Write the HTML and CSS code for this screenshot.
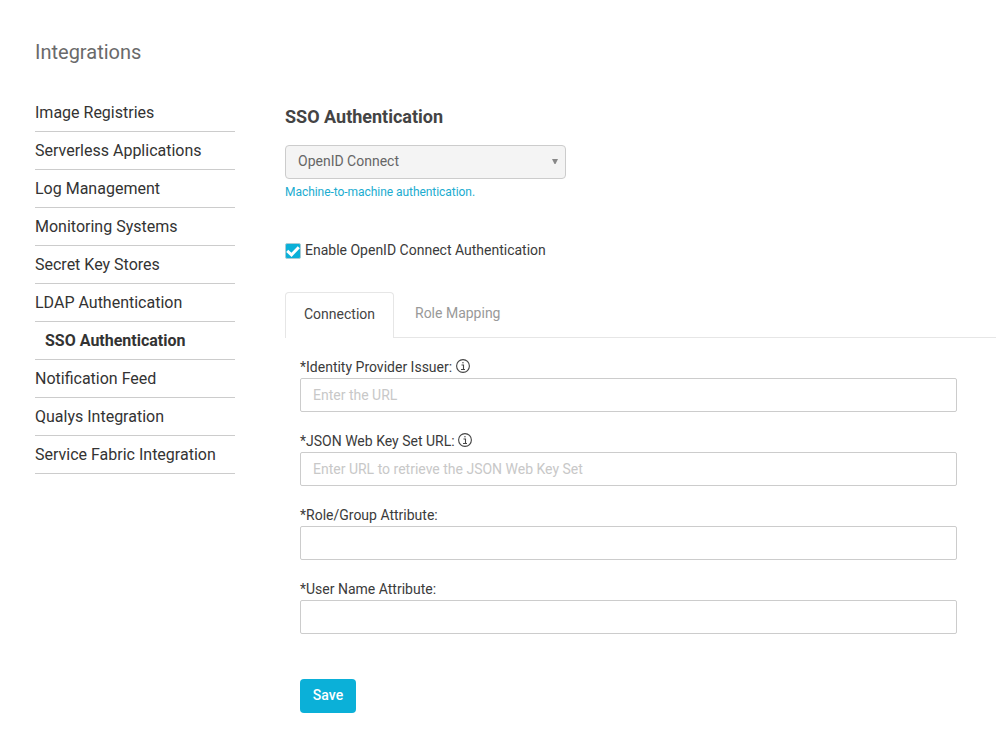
FILE: index.html
```html
<!DOCTYPE html>
<html lang="en">
<head>
<meta charset="utf-8">
<title>Integrations</title>
<link rel="stylesheet" href="styles.css">
</head>
<body>
<h1>Integrations</h1>
<div class="layout">
  <nav class="side">
    <a>Image Registries</a>
    <a>Serverless Applications</a>
    <a>Log Management</a>
    <a>Monitoring Systems</a>
    <a>Secret Key Stores</a>
    <a>LDAP Authentication</a>
    <a class="active">SSO Authentication</a>
    <a>Notification Feed</a>
    <a>Qualys Integration</a>
    <a>Service Fabric Integration</a>
  </nav>
  <main>
    <h2>SSO Authentication</h2>
    <div class="select"><span>OpenID Connect</span><svg width="6" height="5" viewBox="0 0 6 5"><path d="M0 0h6L3.500 5h-1z" fill="#888"/></svg></div>
    <p class="hint">Machine-to-machine authentication.</p>
    <label class="check"><svg width="16" height="16" viewBox="0 0 16 16"><rect x=".5" y=".5" width="15" height="15" rx="1.500" fill="#0bb0d8" stroke="#a9cdd6"/><path d="M2.200 7.800l4.300 4 7.300-7.600" fill="none" stroke="#fff" stroke-width="3"/></svg><span>Enable OpenID Connect Authentication</span></label>
    <div class="tabs"><div class="tab on">Connection</div><div class="tab">Role Mapping</div></div>
    <form class="panel">
      <div class="field"><label>*Identity Provider Issuer: <svg class="info" width="14" height="14" viewBox="0 0 14 14"><circle cx="7" cy="7" r="6.400"/><path d="M5.500 6h2v4.500M5 10.500h4M6.200 3.700h1.500"/></svg></label><input placeholder="Enter the URL"></div>
      <div class="field"><label>*JSON Web Key Set URL: <svg class="info" width="14" height="14" viewBox="0 0 14 14"><circle cx="7" cy="7" r="6.400"/><path d="M5.500 6h2v4.500M5 10.500h4M6.200 3.700h1.500"/></svg></label><input placeholder="Enter URL to retrieve the JSON Web Key Set"></div>
      <div class="field"><label>*Role/Group Attribute:</label><input></div>
      <div class="field"><label>*User Name Attribute:</label><input></div>
      <button type="button">Save</button>
    </form>
  </main>
</div>
</body>
</html>
```
FILE: styles.css
```css
* { box-sizing: border-box; }
body { margin: 0; padding: 40px 0 0 35px; font: 14px/20px Roboto, sans-serif; color: #3b3b3b; background: #fff; overflow: hidden; }
h1 { margin: 0; font-size: 20px; line-height: 24px; font-weight: 400; color: #6a6a6a; }
.layout { display: flex; gap: 50px; padding-top: 30px; }
.side { width: 200px; flex: none; }
.side a { display: block; height: 38px; line-height: 38px; border-bottom: 1px solid #ccc; font-size: 16px; color: #333; }
.side .active { padding-left: 10px; font-weight: 700; }
main { flex: 1; padding-top: 11px; }
h2 { margin: 0 0 16px; font-size: 18px; line-height: 24px; font-weight: 700; color: #444; }
.select { width: 281px; height: 34px; border: 1px solid #ccc; border-radius: 4px; background: #f4f4f4; color: #666; display: flex; align-items: center; justify-content: space-between; padding: 0 7px 0 12px; }
.select span { padding-bottom: 2px; }
.select svg { margin-bottom: 1px; }
.hint { margin: 5px 0 0; font-size: 12px; line-height: 16px; letter-spacing: -.05px; color: #20acd0; }
.check { display: flex; align-items: center; gap: 4px; margin-top: 41px; height: 20px; }
.check span { padding-bottom: 2px; }
.tabs { display: flex; height: 46px; margin-top: 31px; border-bottom: 1px solid #e6e6e6; }
.tab { padding: 0 21px; line-height: 43px; color: #999; }
.tab.on { width: 109px; height: 46px; padding: 0 18px; border: 1px solid #e6e6e6; border-bottom: 0; border-radius: 4px 4px 0 0; background: #fff; color: #444; }
.panel { padding: 18px 39px 0 15px; }
.field { margin-bottom: 18px; }
.field label { display: flex; align-items: center; gap: 3.500px; height: 22px; padding-bottom: 1px; }
.info { fill: none; stroke: #444; stroke-width: 1.100; margin-top: -1px; }
input { display: block; width: 100%; height: 34px; border: 1px solid #ccc; border-radius: 2px; padding: 0 12px; font: inherit; }
input::placeholder { color: #c8c8c8; }
button { width: 56px; height: 34px; margin-top: 27px; padding: 0 0 1px; border: 0; border-radius: 4px; background: #0bb0d8; color: #fff; font: 500 14px/33px Roboto, sans-serif; }
```
